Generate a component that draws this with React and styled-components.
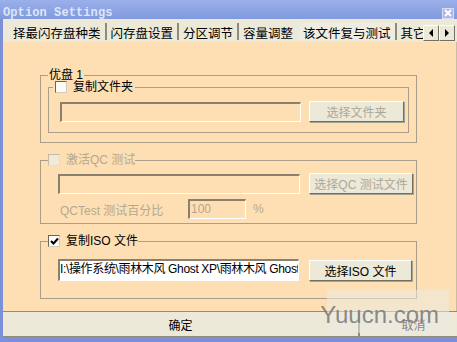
import React from "react";
import styled, { createGlobalStyle } from "styled-components";

const GlobalStyle = createGlobalStyle`
  body { margin: 0; background: #fff; }
  * { box-sizing: border-box; }
`;

const cjk = `"Liberation Sans", "Noto Sans CJK SC", sans-serif`;

const Window = styled.div`
  position: relative;
  width: 457px;
  height: 342px;
  display: flex;
  flex-direction: column;
  background: #7b90d8;
  padding-left: 3px;
  padding-bottom: 5px;
  overflow: hidden;
  font-family: ${cjk};
`;

const TitleBar = styled.div`
  height: 19px;
  margin-left: -3px;
  display: flex;
  align-items: center;
  justify-content: space-between;
  padding: 0 3px 0 3px;
  background: linear-gradient(#9bb0ea, #8199df);
`;

const Title = styled.span`
  font-family: "Liberation Mono", "DejaVu Sans Mono", monospace;
  font-weight: bold;
  font-size: 12px;
  color: #dde6f8;
  letter-spacing: 0.1px;
  margin-top: 6px;
`;

const CloseBtn = styled.div`
  width: 12px;
  height: 11px;
  margin-top: 7px;
  background: #aeb6e6;
  border: 1px solid #d8ddf5;
  display: flex;
  align-items: center;
  justify-content: center;
`;

const TabStrip = styled.div`
  height: 23px;
  display: flex;
  background: #ece9d8;
`;

const TabList = styled.div`
  flex: 1;
  display: flex;
  overflow: hidden;
  padding-left: 3px;
`;

const Tab = styled.div`
  flex: none;
  display: flex;
  align-items: center;
  padding: 2px 4px 0 4px;
  font-size: 12.5px;
  color: #000;
  white-space: nowrap;
  border-right: 2px solid ${(p) => (p.$sep ? "#8f8b7a" : "transparent")};
  margin: 4px 0 2px;
  background: ${(p) => (p.$active ? "#efede2" : "transparent")};
`;

const Arrows = styled.div`
  flex: none;
  display: flex;
  align-self: flex-end;
  margin-bottom: 1px;
  margin-right: 2px;
`;

const ArrowBtn = styled.div`
  width: 16px;
  height: 16px;
  background: #ece9d8;
  border: 1px solid;
  border-color: #fff #716f64 #716f64 #fff;
  display: flex;
  align-items: center;
  justify-content: center;
`;

const Panel = styled.div`
  flex: 1;
  background: #fddfb3;
  padding: 27px 39px 0 37px;
  border-right: 1px solid #c9bda4;
`;

const Group = styled.fieldset`
  margin: ${(p) => p.$mt || 0}px 0 0;
  padding: 0 7px ${(p) => p.$pb}px;
  border: 1px solid #a99f8a;
  min-width: 0;
`;

const InnerGroup = styled.fieldset`
  margin: -1px 0 0;
  padding: 7px 5px 10px 11px;
  border: 1px solid #a99f8a;
  min-width: 0;
`;

const Legend = styled.legend`
  display: flex;
  align-items: center;
  gap: 6px;
  padding: 0 ${(p) => p.$pad || 0}px;
  margin-left: ${(p) => p.$ml || 0}px;
  height: ${(p) => p.$h || 14}px;
  font-size: 12px;
  line-height: ${(p) => p.$h || 14}px;
  color: ${(p) => (p.$disabled ? "#b4a990" : "#000")};
`;

const Box = styled.span`
  width: 12px;
  height: 12px;
  flex: none;
  background: ${(p) => (p.$disabled ? "#f2ead9" : "#fbfaf6")};
  border: 1px solid;
  border-color: ${(p) => (p.$disabled ? "#c2b9a6" : "#6b6557")};
  border-right-color: ${(p) => (p.$disabled ? "#e6dccb" : "#d4ccbb")};
  border-bottom-color: ${(p) => (p.$disabled ? "#e6dccb" : "#d4ccbb")};
  display: flex;
  align-items: center;
  justify-content: center;
`;

const Row = styled.div`
  display: flex;
  align-items: center;
  padding-left: ${(p) => p.$pl || 0}px;
  padding-top: ${(p) => p.$pt || 0}px;
  gap: ${(p) => p.$gap || 0}px;
`;

const Field = styled.div`
  width: ${(p) => p.$w}px;
  height: ${(p) => p.$h || 20}px;
  flex: none;
  background: ${(p) => (p.$white ? "#fff" : "transparent")};
  border-style: solid;
  border-width: 2px 1px 1px 2px;
  border-color: #8a806d #fff #fff #8a806d;
  font-size: 12px;
  line-height: 17px;
  letter-spacing: ${(p) => (p.$tight ? "-0.35px" : "normal")};
  color: ${(p) => (p.$disabled ? "#b4a990" : "#000")};
  white-space: nowrap;
  overflow: hidden;
  padding-left: ${(p) => p.$pl || 0}px;
`;

const Button = styled.div`
  width: ${(p) => p.$w}px;
  height: ${(p) => p.$h || 21}px;
  flex: none;
  background: #ece9d8;
  border: 1px solid;
  border-color: #fff #716f64 #716f64 #fff;
  box-shadow: 1px 1px 0 #a7a393;
  display: flex;
  align-items: center;
  justify-content: center;
  font-size: 12px;
  color: ${(p) => (p.$disabled ? "#aca899" : "#000")};
  white-space: nowrap;
`;

const Label = styled.span`
  width: ${(p) => p.$w}px;
  flex: none;
  font-size: 12px;
  color: #b4a990;
  padding-left: ${(p) => p.$pl || 0}px;
`;

const Footer = styled.div`
  height: 26px;
  display: flex;
  border-top: 1px solid #8f8c7c;
  border-bottom: 1px solid #8f8c7c;
  background: #ece9d8;
`;

const FooterBtn = styled.div`
  width: ${(p) => (p.$w ? `${p.$w}px` : "auto")};
  flex: ${(p) => (p.$w ? "none" : 1)};
  display: flex;
  align-items: center;
  justify-content: center;
  font-size: 12px;
  color: #000;
  border-left: ${(p) => (p.$divider ? "2px solid #8f8c7c" : "none")};
  padding-left: ${(p) => p.$pl || 0}px;
`;

const Watermark = styled.div`
  position: absolute;
  right: 8px;
  bottom: 9px;
  width: 122px;
  height: 43px;
  background: rgba(236, 234, 226, 0.55);
  display: flex;
  align-items: flex-end;
  justify-content: flex-end;
  padding: 0 10px 6px 0;
  font-family: "Liberation Sans", Arial, sans-serif;
  font-size: 24px;
  line-height: 24px;
  color: rgba(120, 120, 120, 0.85);
`;

const Check = () => (
  <svg width="9" height="9" viewBox="0 0 9 9">
    <polyline points="1,4 3.5,6.5 8,1.5" fill="none" stroke="#000" strokeWidth="2" />
  </svg>
);

const Tri = ({ dir }) => (
  <svg width="6" height="8" viewBox="0 0 6 8">
    {dir === "left" ? <polygon points="5,0 5,8 1,4" fill="#000" /> : <polygon points="1,0 1,8 5,4" fill="#000" />}
  </svg>
);

const tabs = [
  { label: "择最闪存盘种类", sep: true },
  { label: "闪存盘设置", sep: true },
  { label: "分区调节", sep: true },
  { label: "容量调整", sep: false },
  { label: "该文件复与测试", sep: true, active: true },
  { label: "其它", sep: false },
];

export default function App() {
  return (
    <>
      <GlobalStyle />
      <Window>
        <TitleBar>
          <Title>Option Settings</Title>
          <CloseBtn>
            <svg width="8" height="8" viewBox="0 0 8 8">
              <path d="M1 1 L7 7 M7 1 L1 7" stroke="#fff" strokeWidth="2" />
            </svg>
          </CloseBtn>
        </TitleBar>
        <TabStrip>
          <TabList>
            {tabs.map((t, i) => (
              <Tab key={t.label} $sep={t.sep} $active={t.active} style={i === 0 ? { marginLeft: 3 } : undefined}>
                {t.label}
              </Tab>
            ))}
          </TabList>
          <Arrows>
            <ArrowBtn><Tri dir="left" /></ArrowBtn>
            <ArrowBtn><Tri dir="right" /></ArrowBtn>
          </Arrows>
        </TabStrip>
        <Panel>
          <Group $pb={9}>
            <Legend $h={12} $pad={1}>优盘 1</Legend>
            <InnerGroup>
              <Legend $ml={-7} $pad={2}>
                <Box />
                复制文件夹
              </Legend>
              <Row $gap={8}>
                <Field $w={241} />
                <Button $w={95} $disabled>选择文件夹</Button>
              </Row>
            </InnerGroup>
          </Group>

          <Group $mt={10} $pb={4}>
            <Legend $pad={0} $disabled>
              <Box $disabled />
              激活QC 测试
            </Legend>
            <Row $pl={10} $pt={6} $gap={9}>
              <Field $w={242} />
              <Button $w={104} $disabled>选择QC 测试文件</Button>
            </Row>
            <Row $pl={10} $pt={5}>
              <Label $w={130} $pl={2}>QCTest 测试百分比</Label>
              <Field $w={58} $pl={1} $disabled>100</Field>
              <Label $w={20} $pl={7}>%</Label>
            </Row>
          </Group>

          <Group $mt={10} $pb={17}>
            <Legend $pad={0}>
              <Box><Check /></Box>
              复制ISO 文件
            </Legend>
            <Row $pl={10} $pt={11} $gap={10}>
              <Field $w={241} $h={22} $white $tight>I:\操作系统\雨林木风 Ghost XP\雨林木风 Ghost</Field>
              <Button $w={103}>选择ISO 文件</Button>
            </Row>
          </Group>
        </Panel>
        <Footer>
          <FooterBtn $w={355}>确定</FooterBtn>
          <FooterBtn $divider $pl={10}>取消</FooterBtn>
        </Footer>
        <Watermark>Yuucn.com</Watermark>
      </Window>
    </>
  );
}
